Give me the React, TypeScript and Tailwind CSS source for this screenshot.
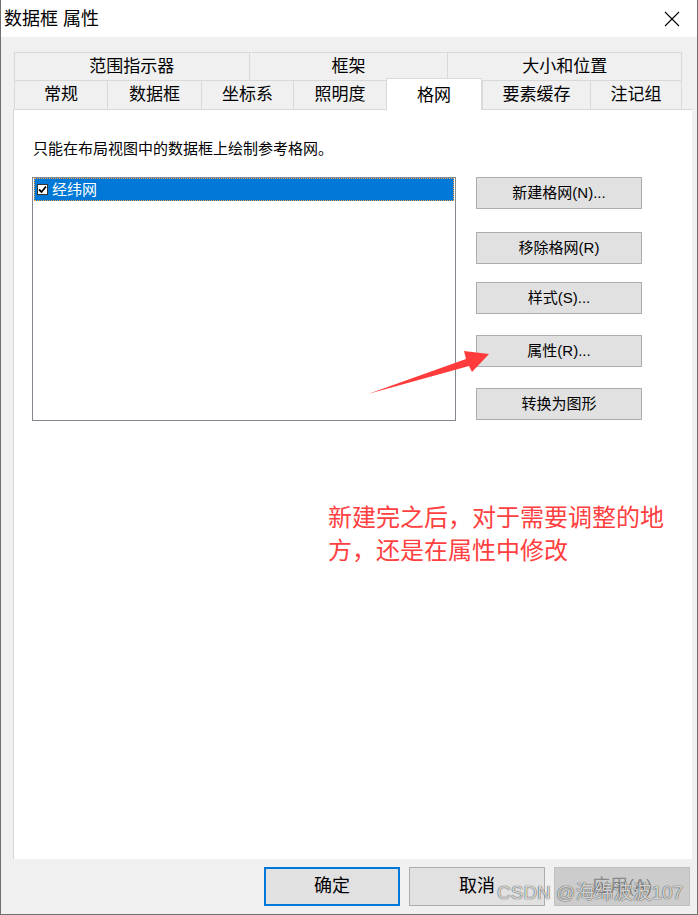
import React from 'react';

const FONT = "font-['Liberation_Sans','Noto_Sans_CJK_SC',sans-serif]";

const sideButtons = [
  { label: '新建格网(N)...', mt: 'mt-0' },
  { label: '移除格网(R)', mt: 'mt-[23px]' },
  { label: '样式(S)...', mt: 'mt-[18px]' },
  { label: '属性(R)...', mt: 'mt-[21px]' },
  { label: '转换为图形', mt: 'mt-[21px]' },
];

function TopTab({ label, w }: { label: string; w: string }) {
  return (
    <div className={`${w} h-full flex items-center justify-center border-l border-t border-[#d9d9d9] text-[17px] text-black`}>
      {label}
    </div>
  );
}

export default function App() {
  return (
    <div className={`${FONT} relative w-[698px] h-[915px] bg-[#f0f0f0] border-l border-r border-b border-[#6f6f6f] flex flex-col overflow-hidden`}>
      {/* 标题栏 */}
      <div className="h-[37px] bg-white flex items-center justify-between pl-[3px] pr-[17px] shrink-0">
        <span className="text-[18px] text-black leading-none">数据框 属性</span>
        <svg width="16" height="16" viewBox="0 0 16 16" className="text-black">
          <path d="M1 1 L15 15 M15 1 L1 15" stroke="currentColor" strokeWidth="1.1" fill="none" />
        </svg>
      </div>

      {/* 选项卡 */}
      <div className="pt-[15px] pl-[13px] shrink-0">
        <div className="flex h-[28px] w-[668px] border-r border-[#d9d9d9]">
          <TopTab label="范围指示器" w="w-[235px]" />
          <TopTab label="框架" w="w-[199px]" />
          <TopTab label="大小和位置" w="w-[234px]" />
        </div>
        <div className="flex h-[29px] w-[668px] items-end">
          <TopTab label="常规" w="w-[93px]" />
          <TopTab label="数据框" w="w-[94px]" />
          <TopTab label="坐标系" w="w-[92px]" />
          <TopTab label="照明度" w="w-[93px]" />
          <div className="relative z-10 w-[96px] h-[32px] -mb-px bg-white border-l border-r border-t border-[#d9d9d9] flex items-start justify-center pt-[4px] text-[17px] text-black">
            格网
          </div>
          <TopTab label="要素缓存" w="w-[108px]" />
          <div className="w-[92px] h-full flex items-center justify-center border-l border-r border-t border-[#d9d9d9] text-[17px] text-black">
            注记组
          </div>
        </div>
      </div>

      {/* 面板 */}
      <div className="relative ml-[12px] w-[679px] h-[750px] bg-white border-l border-t border-[#d9d9d9] pl-[18px] pt-[29px] shrink-0">
        <p className="text-[15px] leading-[20px] text-black pl-px">只能在布局视图中的数据框上绘制参考格网。</p>
        <div className="flex mt-[18px] gap-[20px]">
          <div className="w-[424px] h-[244px] border border-[#828790] bg-white px-px">
            <div className="h-[23px] bg-[#0078d7] border border-dotted border-[#f5a142] flex items-center pl-[2px] gap-[4px]">
              <div className="w-[11px] h-[11px] bg-white border border-[#333] flex items-center justify-center">
                <svg width="9" height="9" viewBox="0 0 9 9">
                  <path d="M1 4.5 L3.5 7 L8 1.5" stroke="#000" strokeWidth="1.8" fill="none" />
                </svg>
              </div>
              <span className="text-[15px] leading-none text-white">经纬网</span>
            </div>
          </div>
          <div className="flex flex-col">
            {sideButtons.map((b) => (
              <button
                key={b.label}
                className={`${b.mt} w-[166px] h-[32px] bg-[#e1e1e1] border border-[#adadad] text-[15px] text-black flex items-center justify-center`}
              >
                {b.label}
              </button>
            ))}
          </div>
        </div>

        {/* 标注文字 */}
        <div className="absolute left-[314px] top-[391px] text-[24px] leading-[33px] text-[#ff4040]">
          新建完之后，对于需要调整的地
          <br />
          方，还是在属性中修改
        </div>
      </div>

      {/* 底部按钮 */}
      <div className="flex justify-end gap-[9px] pt-[8px] pr-[7px]">
        <button className="w-[136px] h-[39px] bg-[#e1e1e1] border-2 border-[#0078d7] text-[18px] text-black">确定</button>
        <button className="w-[136px] h-[39px] bg-[#e1e1e1] border border-[#adadad] text-[18px] text-black">取消</button>
        <button className="w-[136px] h-[39px] bg-[#cccccc] border border-[#bfbfbf] text-[18px] text-[#8a8a8a]">应用(A)</button>
      </div>

      {/* 红色箭头 */}
      <svg className="absolute left-[360px] top-[345px]" width="135" height="55" viewBox="0 0 135 55">
        <polygon points="7,49 105,14 103,6 128,9 111,27 108,21" fill="#ff3b3b" />
      </svg>

      {/* 水印 */}
      <div className="absolute left-[496px] top-[881px] text-[19px] leading-[24px] text-[rgba(255,255,255,0.8)] [text-shadow:0_0_1px_rgba(0,0,0,0.6),0_0_1px_rgba(0,0,0,0.6)]">
        CSDN @海绵波波107
      </div>
    </div>
  );
}
